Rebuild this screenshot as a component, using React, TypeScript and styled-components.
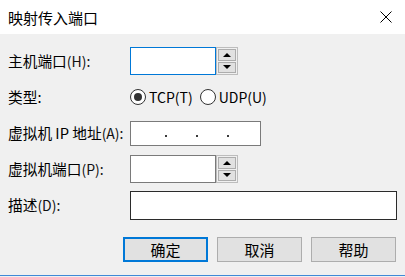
import React from 'react';
import styled, { createGlobalStyle } from 'styled-components';

const GlobalStyle = createGlobalStyle`
  html, body {
    margin: 0;
    padding: 0;
    background: #f0f0f0;
  }
  body {
    font-family: "Noto Sans CJK SC", "Microsoft YaHei", sans-serif;
    font-size: 15px;
    color: #000;
  }
`;

const Window = styled.div`
  width: 405px;
  height: 276px;
  box-sizing: border-box;
  background: #f0f0f0;
  border-bottom: 1px solid #4189d6;
  display: flex;
  flex-direction: column;
`;

const TitleBar = styled.div`
  height: 34px;
  background: #fff;
  display: flex;
  align-items: center;
  justify-content: space-between;
  padding: 0 13px 0 8px;
  flex-shrink: 0;
`;

const Title = styled.span`
  font-size: 15px;
  line-height: 1;
`;

const CloseIcon = styled.svg`
  width: 12px;
  height: 12px;
  display: block;
`;

const Body = styled.div`
  padding: 9px 8px 0 8px;
  display: flex;
  flex-direction: column;
`;

const Form = styled.div`
  display: grid;
  grid-template-columns: 122px 1fr;
  grid-auto-rows: 36px;
  align-items: center;
`;

const Label = styled.span`
  font-size: 14.7px;
  line-height: 1;
  white-space: nowrap;
`;

const Mnemonic = styled.span`
  font-size: 14px;
  color: #111;
`;

const Field = styled.div`
  display: flex;
  align-items: center;
`;

const TextBox = styled.div<{ $width: number; $height: number; $border: string }>`
  width: ${p => p.$width}px;
  height: ${p => p.$height}px;
  box-sizing: border-box;
  background: #fff;
  border: 1px solid ${p => p.$border};
`;

const Spinner = styled.div`
  width: 22px;
  height: 28px;
  box-sizing: border-box;
  border: 1px solid #bdbdbd;
  padding: 1px;
  display: flex;
  flex-direction: column;
  gap: 1px;
  background: #f0f0f0;
`;

const SpinButton = styled.div<{ $dir: 'up' | 'down' }>`
  flex: 1;
  box-sizing: border-box;
  border: 1px solid #adadad;
  background: #e1e1e1;
  display: flex;
  align-items: center;
  justify-content: center;

  &::after {
    content: '';
    width: 0;
    height: 0;
    border-left: 4px solid transparent;
    border-right: 4px solid transparent;
    ${p => (p.$dir === 'up' ? 'border-bottom: 4px solid #000;' : 'border-top: 4px solid #000;')}
  }
`;

const RadioGroup = styled.div`
  display: flex;
  align-items: center;
  gap: 7px;
`;

const RadioOption = styled.label`
  display: flex;
  align-items: center;
  gap: 3px;
  font-size: 14px;
  line-height: 1;
`;

const RadioCircle = styled.span<{ $checked?: boolean }>`
  width: 16px;
  height: 16px;
  box-sizing: border-box;
  border-radius: 50%;
  border: 1px solid #333;
  background: #fff;
  display: flex;
  align-items: center;
  justify-content: center;

  &::after {
    content: '';
    width: 8px;
    height: 8px;
    border-radius: 50%;
    background: ${p => (p.$checked ? '#333' : 'transparent')};
  }
`;

const IpBox = styled.div`
  width: 131px;
  height: 25px;
  box-sizing: border-box;
  background: #fff;
  border: 1px solid #7a7a7a;
  display: flex;
  align-items: center;
  padding-left: 34px;
  padding-top: 5px;
  gap: 29px;
`;

const IpDot = styled.span`
  width: 2px;
  height: 2px;
  background: #3a3a3a;
`;

const Footer = styled.div`
  margin-top: 14px;
  display: flex;
  justify-content: flex-end;
  gap: 9px;
  padding-right: 1px;
`;

const Button = styled.button<{ $default?: boolean }>`
  width: 85px;
  height: 25px;
  box-sizing: border-box;
  background: #e1e1e1;
  border: ${p => (p.$default ? '2px solid #0078d7' : '1px solid #adadad')};
  font-family: inherit;
  font-size: 15px;
  color: #000;
  padding: 0;
  line-height: 1;
`;

function PortField({ focused }: { focused?: boolean }) {
  return (
    <Field>
      <TextBox $width={86} $height={28} $border={focused ? '#0078d7' : '#7a7a7a'} />
      <Spinner>
        <SpinButton $dir="up" />
        <SpinButton $dir="down" />
      </Spinner>
    </Field>
  );
}

export default function App() {
  return (
    <>
      <GlobalStyle />
      <Window>
        <TitleBar>
          <Title>映射传入端口</Title>
          <CloseIcon viewBox="0 0 12 12">
            <path d="M0.5 0.5 L11.5 11.5 M11.5 0.5 L0.5 11.5" stroke="#000" strokeWidth="1" fill="none" />
          </CloseIcon>
        </TitleBar>
        <Body>
          <Form>
            <Label>主机端口<Mnemonic>(H):</Mnemonic></Label>
            <PortField focused />

            <Label>类型:</Label>
            <RadioGroup>
              <RadioOption>
                <RadioCircle $checked />
                TCP(T)
              </RadioOption>
              <RadioOption>
                <RadioCircle />
                UDP(U)
              </RadioOption>
            </RadioGroup>

            <Label>虚拟机 IP 地址<Mnemonic>(A):</Mnemonic></Label>
            <Field>
              <IpBox>
                <IpDot />
                <IpDot />
                <IpDot />
              </IpBox>
            </Field>

            <Label>虚拟机端口<Mnemonic>(P):</Mnemonic></Label>
            <PortField />

            <Label>描述<Mnemonic>(D):</Mnemonic></Label>
            <Field>
              <TextBox $width={267} $height={29} $border="#2b2b2b" />
            </Field>
          </Form>
          <Footer>
            <Button $default>确定</Button>
            <Button>取消</Button>
            <Button>帮助</Button>
          </Footer>
        </Body>
      </Window>
    </>
  );
}
